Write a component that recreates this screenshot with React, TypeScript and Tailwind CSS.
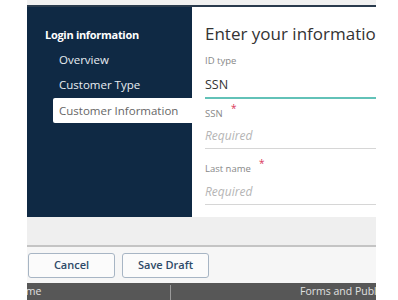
import React from "react";

export default function App() {
  return (
    <div className="w-[398px] h-[300px] bg-white overflow-hidden" style={{ fontFamily: '"Open Sans", "Liberation Sans", sans-serif' }}>
      <div className="ml-[27px] w-[349px] h-[300px] flex flex-col overflow-hidden">
        <div className="h-[5px] bg-[#f1f1f1]" />
        <div className="h-[2px] bg-[#2a3b4d]" />
        <div className="h-[210px] flex">
          <div className="w-[165px] shrink-0 bg-[#0f2944] pt-[21px] flex flex-col">
            <div className="pl-[18px] text-[11px] font-bold text-white leading-[14px] tracking-[-0.3px]">Login information</div>
            <div className="pl-[32px] mt-[11px] text-[11.5px] text-[#e8edf2] leading-[14px]">Overview</div>
            <div className="pl-[32px] mt-[11px] text-[11.5px] text-[#e8edf2] leading-[14px]">Customer Type</div>
            <div className="ml-[26px] mt-[6px] h-[25px] bg-white rounded-l-[2px] pl-[6px] flex items-center text-[11.5px] text-[#666]">Customer Information</div>
          </div>
          <div className="flex-1 min-w-0 bg-white pl-[13px] pt-[15px] flex flex-col">
            <div className="text-[17px] text-[#333] leading-[24px] whitespace-nowrap overflow-hidden">Enter your information</div>
            <div className="mt-[9px] text-[9.5px] text-[#888] leading-[12px]">ID type</div>
            <div className="mt-[10px] text-[12.5px] text-[#333] leading-[16px]">SSN</div>
            <div className="mt-[4px] h-[2px] bg-[#62c2b8]" />
            <div className="mt-[9px] text-[9.5px] text-[#888] leading-[12px] relative">SSN<span className="absolute left-[26px] -top-[6px] text-[#d9365a] text-[10px]">*</span></div>
            <div className="mt-[8px] text-[12px] italic text-[#b5b5b5] leading-[16px]">Required</div>
            <div className="mt-[4px] h-px bg-[#d6d6d6]" />
            <div className="mt-[14px] text-[9.5px] text-[#888] leading-[12px] relative">Last name<span className="absolute left-[54px] -top-[6px] text-[#d9365a] text-[10px]">*</span></div>
            <div className="mt-[9px] text-[12px] italic text-[#b5b5b5] leading-[16px]">Required</div>
            <div className="mt-[4px] h-px bg-[#d6d6d6]" />
          </div>
        </div>
        <div className="h-[28px] bg-[#efefef]" />
        <div className="h-[2px] bg-[#c4c4c4]" />
        <div className="h-[36px] bg-[#f6f6f6] flex items-center pl-px gap-[7px]">
          <button className="w-[87px] h-[25px] border border-[#a7b5c4] rounded-[3px] bg-[#fbfbfb] text-[11px] text-[#2e4a68] font-semibold">Cancel</button>
          <button className="w-[87px] h-[25px] border border-[#a7b5c4] rounded-[3px] bg-[#fbfbfb] text-[11px] text-[#2e4a68] font-semibold">Save Draft</button>
        </div>
        <div className="flex-1 bg-[#575757] flex items-center text-[10.5px] text-[#e0e0e0] relative overflow-hidden">
          <span className="absolute -left-[15px]">Name</span>
          <div className="absolute left-[143px] top-[2px] bottom-0 w-px bg-[#9a9a9a]" />
          <span className="absolute left-[273px] whitespace-nowrap">Forms and Publications</span>
        </div>
      </div>
    </div>
  );
}
